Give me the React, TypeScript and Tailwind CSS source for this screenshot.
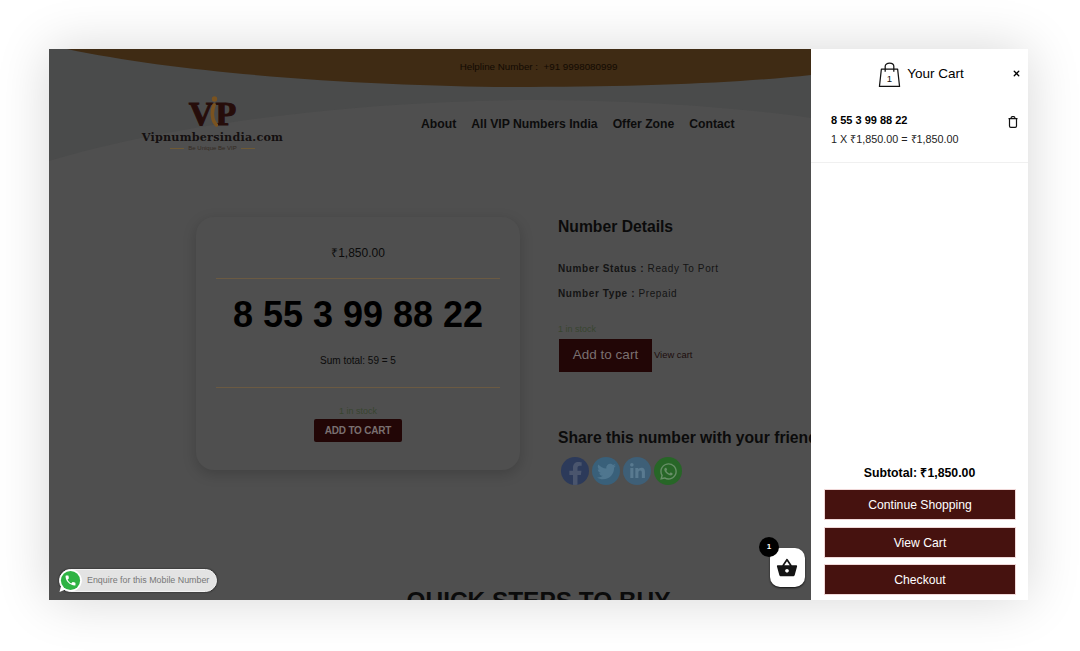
import React from 'react';
import { FaFacebookF, FaTwitter, FaLinkedinIn, FaWhatsapp } from 'react-icons/fa';
import { MdShoppingBasket } from 'react-icons/md';
import { X } from 'lucide-react';

const sans = { fontFamily: '"Liberation Sans", Arial, sans-serif' };

const Swoosh: React.FC = () => (
  <svg className="absolute inset-0 w-[979px] h-[130px]" viewBox="0 0 979 130" fill="none">
    <path d="M0 0V112C120 76 300 52 480 51C600 51 700 60 762 69L979 95V0Z" fill="#4a4b4b" />
    <path d="M18 0C150 28 350 38 480 38C600 38 700 33 762 26L979 0Z" fill="#3f2b14" />
  </svg>
);

const Logo: React.FC = () => (
  <div className="w-[141px] flex flex-col items-center">
    <div className="h-[35px] flex items-end text-[#260d0a] font-bold leading-[30px] text-[34px] [-webkit-text-stroke:1px_#260d0a]" style={{ fontFamily: '"Liberation Serif", serif' }}>
      <span>V</span>
      <svg className="mx-[-3px] mb-[2px] relative" width="8" height="31" viewBox="0 0 8 31" fill="none">
        <circle cx="4.5" cy="3" r="2.7" fill="#7a5320" />
        <path d="M4 9C1.5 15 1.5 24 6.5 29" stroke="#7a5320" strokeWidth="3.6" strokeLinecap="round" />
      </svg>
      <span>P</span>
    </div>
    <div className="mt-[1px] text-[11.2px] font-bold leading-[14px] tracking-[0.2px] text-[#141010] whitespace-nowrap" style={{ fontFamily: '"DejaVu Serif", serif' }}>Vipnumbersindia.com</div>
    <div className="flex items-center gap-[4px] text-[6px] leading-[8px] text-[#332a22] whitespace-nowrap" style={sans}>
      <span className="w-[14px] h-px shrink-0 bg-[#6f5a35]"></span>
      <span>Be Unique Be VIP</span>
      <span className="w-[14px] h-px shrink-0 bg-[#6f5a35]"></span>
    </div>
  </div>
);

const ProductCard: React.FC = () => (
  <div className="w-[324px] h-[253px] rounded-[18px] bg-[#4f4f4f] shadow-[0_4px_14px_rgba(0,0,0,0.18)] px-[20px] flex flex-col items-center text-[#0b0b0b]">
    <div className="h-[62px] w-full flex items-center justify-center text-[12px] border-b border-[#6b5a42] pt-[10px]">₹1,850.00</div>
    <div className="mt-[14px] text-[36px] leading-[44px] font-bold text-black whitespace-nowrap">8 55 3 99 88 22</div>
    <div className="mt-[16px] pt-[1px] h-[35px] w-full flex justify-center text-[10px] leading-[14px] border-b border-[#6b5a42]">Sum total: 59 = 5</div>
    <div className="mt-[17px] text-[9px] leading-[12px] text-[#38452f]">1 in stock</div>
    <button className="mt-[2px] w-[88px] h-[23px] rounded-[2px] bg-[#220606] text-[10px] font-bold tracking-[-0.2px] text-[#7a7070]">ADD TO CART</button>
  </div>
);

const Details: React.FC = () => (
  <div className="ml-[38px] w-[300px] text-[#0e0e0e]">
    <h2 className="text-[15.7px] leading-[20px] font-bold text-[#0b0b0b] whitespace-nowrap">Number Details</h2>
    <p className="mt-[25px] text-[10px] leading-[14px] tracking-[0.6px] text-[#141414]"><b>Number Status :</b> Ready To Port</p>
    <p className="mt-[11px] text-[10px] leading-[14px] tracking-[0.6px] text-[#141414]"><b>Number Type :</b> Prepaid</p>
    <p className="mt-[22px] text-[9px] leading-[12px] text-[#38452f]">1 in stock</p>
    <div className="mt-[4px] ml-[1px] flex items-center">
      <button className="w-[93px] h-[33px] bg-[#220606] text-[13.5px] text-[#7a7070]">Add to cart</button>
      <a className="ml-[2px] text-[9.4px] text-[#1c0d0d]">View cart</a>
    </div>
    <h3 className="mt-[56px] text-[15.7px] leading-[20px] font-bold text-[#0b0b0b] whitespace-nowrap">Share this number with your friends</h3>
    <div className="mt-[9px] ml-[3px] flex gap-[3px]">
      <span className="w-[28px] h-[28px] rounded-full bg-[#2c3a5a] flex items-end justify-center text-[#4a556d] overflow-hidden"><FaFacebookF size={23} /></span>
      <span className="w-[28px] h-[28px] rounded-full bg-[#39607a] flex items-center justify-center text-[#4f768f]"><FaTwitter size={19} /></span>
      <span className="w-[28px] h-[28px] rounded-full bg-[#3e5f77] flex items-center justify-center text-[#597a90]"><FaLinkedinIn size={17} /></span>
      <span className="w-[28px] h-[28px] rounded-full bg-[#276627] flex items-center justify-center text-[#678f67]"><FaWhatsapp size={19} /></span>
    </div>
  </div>
);

const CartPanel: React.FC = () => (
  <aside className="absolute top-0 right-0 bottom-0 w-[217px] bg-white flex flex-col text-black">
    <div className="h-[50px] relative flex items-center justify-center pl-[3px] pt-[1px] gap-[6px]">
      <svg width="23" height="27" viewBox="0 0 24 28" fill="none" stroke="#111" strokeWidth="1.3">
        <path d="M3.5 8.5H20.5L22.5 26.5H1.5Z" strokeLinejoin="round" />
        <path d="M7.5 11V5.5C7.5 1 16.5 1 16.5 5.5V11" />
        <text x="12" y="21.5" textAnchor="middle" fontSize="10" fill="#111" stroke="none" style={sans}>1</text>
      </svg>
      <span className="text-[13.5px]">Your Cart</span>
      <X size={9} strokeWidth={3.5} className="absolute right-[7px] top-[20px]" />
    </div>
    <div className="h-[64px] border-b border-[#f0f0f0] pl-[20px] pr-[10px] pt-[14px] relative">
      <div className="text-[11px] leading-[14px] font-bold">8 55 3 99 88 22</div>
      <div className="mt-[5px] text-[10.8px] leading-[14px] text-[#222]">1 X ₹1,850.00 = ₹1,850.00</div>
      <svg className="absolute right-[10px] top-[17px]" width="10" height="12" viewBox="0 0 10 12" fill="none" stroke="#111" strokeWidth="1.2">
        <path d="M0.5 2.6H9.5M1.5 2.6V10C1.5 10.8 2.1 11.4 2.8 11.4H7.2C7.9 11.4 8.5 10.8 8.5 10V2.6M3.2 2.6V1.6C3.2 1 3.7 0.6 4.2 0.6H5.8C6.3 0.6 6.8 1 6.8 1.6V2.6" />
      </svg>
    </div>
    <div className="flex-1"></div>
    <div className="text-center text-[12.3px] leading-[16px] font-bold">Subtotal: ₹1,850.00</div>
    <div className="mt-[8px] pl-[13px] pr-[12px] pb-[5px] flex flex-col">
      <button className="h-[31px] pt-[1px] bg-[#46120f] border border-[#f0d8d8] text-[12.2px] text-white">Continue Shopping</button>
      <button className="mt-[7px] h-[31px] pt-[1px] bg-[#46120f] border border-[#f0d8d8] text-[12.2px] text-white">View Cart</button>
      <button className="mt-[6px] h-[31px] pt-[1px] bg-[#46120f] border border-[#f0d8d8] text-[12.2px] text-white">Checkout</button>
    </div>
  </aside>
);

export default function App() {
  return (
    <div className="w-[1080px] h-[651px] bg-white pl-[49px] pt-[49px] overflow-hidden" style={sans}>
      <div className="relative w-[979px] h-[551px] overflow-hidden bg-[#4f4f4f] shadow-[0_0_50px_rgba(0,0,0,0.16)]">
        <Swoosh />
        <div className="relative">
          <div className="h-[36px] pt-[1px] flex items-center justify-center text-[9.8px] text-[#120a02]">Helpline Number :&nbsp; +91 9998080999</div>
          <header className="h-[80px] flex items-start pl-[93px]">
            <div className="pt-[9px]"><Logo /></div>
            <nav className="ml-[138px] pt-[32px] flex gap-[15px] text-[12.2px] leading-[14px] font-bold text-[#0c0c0c] whitespace-nowrap">
              <a>About</a>
              <a>All VIP Numbers India</a>
              <a>Offer Zone</a>
              <a>Contact</a>
            </nav>
          </header>
          <main className="pl-[147px] pt-[52px] flex items-start">
            <ProductCard />
            <Details />
          </main>
          <h2 className="mt-[102px] text-center text-[24.4px] leading-[28px] font-bold text-[#0b0b0b]">QUICK STEPS TO BUY</h2>
        </div>

        <div className="absolute left-[10px] top-[520px] w-[158px] h-[23px] rounded-full bg-[#e3e3e3] border border-[#f2f2f2] shadow-[0_0_2px_rgba(0,0,0,0.7)] flex items-center pl-[27px] text-[8.9px] text-[#777] whitespace-nowrap">
          Enquire for this Mobile Number
        </div>
        <svg className="absolute left-[10px] top-[520px]" width="23" height="24" viewBox="0 0 23 24">
          <path d="M11.5 0.5A11 11 0 1 1 6 20.8L0.5 23L2 17A11 11 0 0 1 11.5 0.5Z" fill="#fff" />
          <circle cx="11.5" cy="11.5" r="9.6" fill="#2fb344" />
          <path transform="translate(4.9 4.9) scale(0.55)" d="M6.62 10.79c1.44 2.83 3.76 5.14 6.59 6.59l2.2-2.2c.27-.27.67-.36 1.02-.24 1.12.37 2.33.57 3.57.57.55 0 1 .45 1 1V20c0 .55-.45 1-1 1-9.39 0-17-7.61-17-17 0-.55.45-1 1-1h3.5c.55 0 1 .45 1 1 0 1.25.2 2.45.57 3.57.11.35.03.74-.25 1.02l-2.2 2.2z" fill="#fff" />
        </svg>

        <CartPanel />

        <button className="absolute left-[721px] top-[499px] w-[35px] h-[39px] rounded-[10px] bg-white shadow-[0_1px_2px_rgba(0,0,0,0.8)] flex items-center justify-center pr-[1px] text-[#141414]">
          <MdShoppingBasket size={22} />
        </button>
        <span className="absolute left-[710px] top-[488px] w-[20px] h-[20px] rounded-full bg-black text-white text-[8px] font-bold flex items-center justify-center">1</span>
      </div>
    </div>
  );
}
